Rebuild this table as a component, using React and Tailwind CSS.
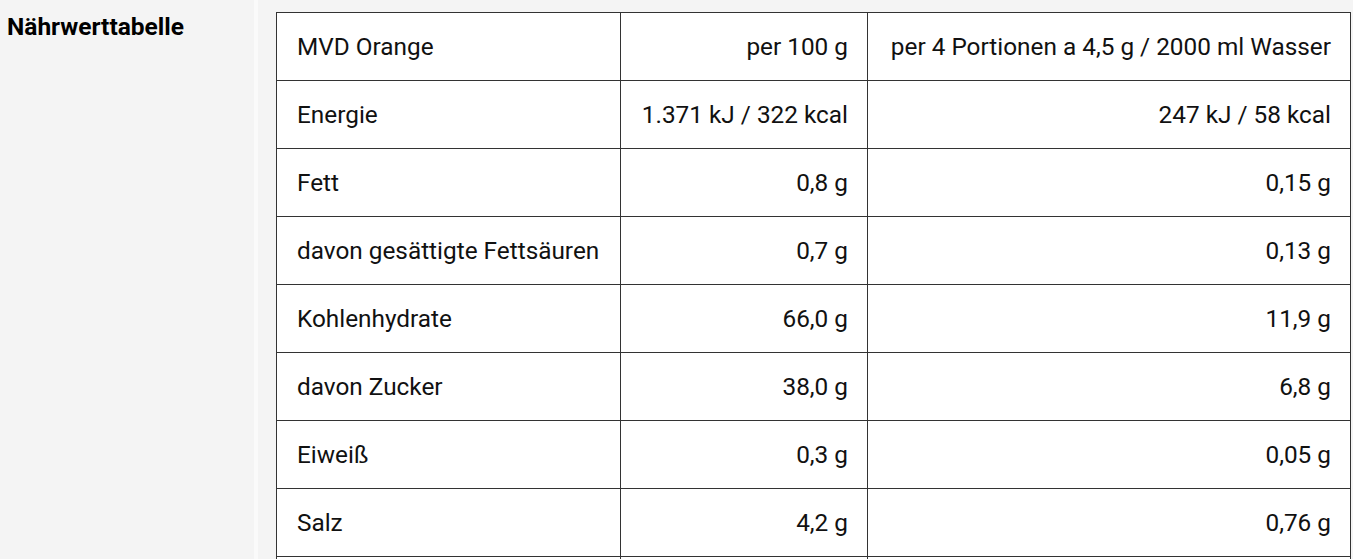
import React from 'react';

const rows = [
  ['MVD Orange', 'per 100 g', 'per 4 Portionen a 4,5 g / 2000 ml Wasser'],
  ['Energie', '1.371 kJ / 322 kcal', '247 kJ / 58 kcal'],
  ['Fett', '0,8 g', '0,15 g'],
  ['davon gesättigte Fettsäuren', '0,7 g', '0,13 g'],
  ['Kohlenhydrate', '66,0 g', '11,9 g'],
  ['davon Zucker', '38,0 g', '6,8 g'],
  ['Eiweiß', '0,3 g', '0,05 g'],
  ['Salz', '4,2 g', '0,76 g'],
  ['', '', ''],
];

const App = () => {
  return (
    <div className="flex h-[559px] w-[1353px] overflow-hidden font-['Roboto',sans-serif] text-[#111]">
      <div className="w-[254px] shrink-0 bg-[#f4f4f4] pl-[7px] pt-[11px]">
        <h2 className="text-[24.5px] font-bold leading-[32px] text-black">Nährwerttabelle</h2>
      </div>
      <div className="w-[4px] shrink-0 bg-[#fafafa]"></div>
      <div className="flex-1 bg-[#f4f4f4] pl-[18px] pt-[12px]">
        <table className="w-[1074px] table-fixed border-collapse bg-white text-[24.35px] leading-[30px]">
          <colgroup>
            <col className="w-[344px]" />
            <col className="w-[247px]" />
            <col className="w-[483px]" />
          </colgroup>
          <tbody>
            {rows.map((r, i) => (
              <tr key={i} className="h-[68px]">
                <td className="border border-[#333] px-[20px] text-left">{r[0]}</td>
                <td className="border border-[#333] px-[19px] text-right">{r[1]}</td>
                <td className="border border-[#333] px-[19px] text-right">{r[2]}</td>
              </tr>
            ))}
          </tbody>
        </table>
      </div>
    </div>
  );
};

export default App;
